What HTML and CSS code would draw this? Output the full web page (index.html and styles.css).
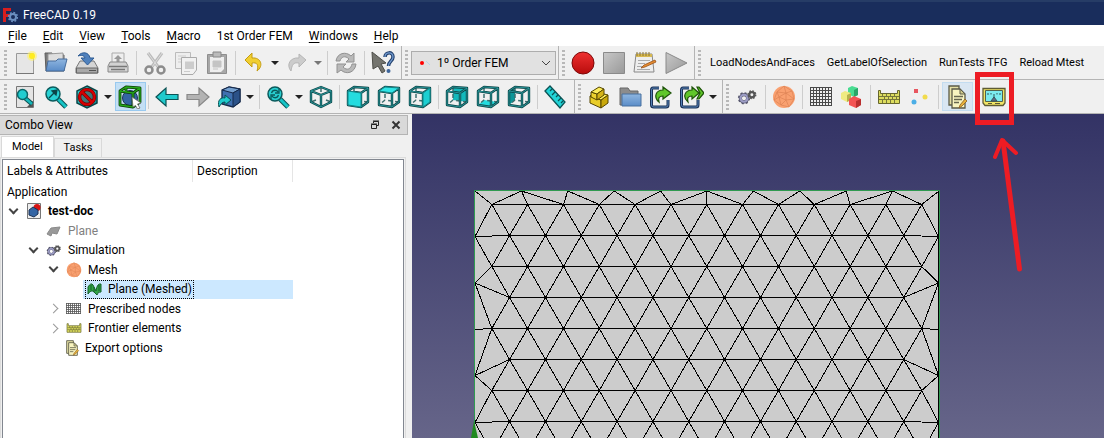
FILE: index.html
```html
<!DOCTYPE html>
<html lang="en">
<head>
<meta charset="utf-8">
<title>FreeCAD 0.19</title>
<link rel="stylesheet" href="styles.css">
</head>
<body>
<svg class="defs" aria-hidden="true">
  <defs>
    <linearGradient id="cy" x1="0" y1="0" x2="1" y2="1"><stop offset="0" stop-color="#34e0e2"/><stop offset="1" stop-color="#06989a"/></linearGradient>
    <linearGradient id="gr" x1="0" y1="0" x2="1" y2="1"><stop offset="0" stop-color="#c8c8c8"/><stop offset="1" stop-color="#999"/></linearGradient>
    <linearGradient id="bl" x1="0" y1="0" x2="0" y2="1"><stop offset="0" stop-color="#8fb6e0"/><stop offset="1" stop-color="#5a8cc8"/></linearGradient>
    <linearGradient id="rd" x1="0" y1="0" x2="0" y2="1"><stop offset="0" stop-color="#ef3030"/><stop offset="1" stop-color="#b80c0c"/></linearGradient>
    <symbol id="wire" viewBox="0 0 24 24">
      <g fill="none" stroke-linejoin="round">
        <path d="M8 2v13M22 17L8 15L2 20" stroke="#3d6f70" stroke-width="1.500" stroke-dasharray="4 3"/>
        <path d="M2 6L15 8V22L2 20ZM2 6L8 2L22 3L15 8M22 3V17L15 22" stroke="#0b4648" stroke-width="2.400"/>
        <path d="M2 6L15 8V22L2 20ZM2 6L8 2L22 3L15 8M22 3V17L15 22" stroke="#2fa5a8" stroke-width="0.800"/>
      </g>
    </symbol>
    <symbol id="gears" viewBox="0 0 24 24">
      <circle cx="8" cy="14" r="4.2" fill="none" stroke="#55556c" stroke-width="3.6"/>
      <circle cx="8" cy="14" r="6" fill="none" stroke="#55556c" stroke-width="2" stroke-dasharray="2.4 2.3"/>
      <circle cx="8" cy="14" r="4" fill="none" stroke="#9d9dc6" stroke-width="2.4"/>
      <circle cx="17" cy="10" r="3" fill="none" stroke="#555" stroke-width="2.6"/>
      <circle cx="17" cy="10" r="4.4" fill="none" stroke="#555" stroke-width="1.6" stroke-dasharray="1.8 1.65"/>
    </symbol>
    <symbol id="ball" viewBox="0 0 24 24">
      <circle cx="12" cy="12" r="11" fill="#f9a070"/>
      <path d="M12 1L5 7L2 15L9 20L17 22L22 14L20 6L12 1L14 8L22 14L14 15L9 20L7 12L2 15M5 7L14 8L7 12L5 7M14 8L20 6M14 8V15L17 22M7 12L14 15" fill="none" stroke="#dc8354" stroke-width="0.700"/>
    </symbol>
    <symbol id="grid" viewBox="0 0 24 24">
      <path d="M1 2.500H23M1 5.500H23M1 8.500H23M1 11.500H23M1 14.500H23M1 17.500H23M1 20.500H23M1.500 2V21M4.500 2V21M7.500 2V21M10.500 2V21M13.500 2V21M16.500 2V21M19.500 2V21M22.500 2V21" stroke="#4a4a4a" fill="none"/>
    </symbol>
    <symbol id="grid-small" viewBox="0 0 16 16">
      <path d="M0 2.500H15M0 4.500H15M0 6.500H15M0 8.500H15M0 10.500H15M0 12.500H15M.5 2V13M2.500 2V13M4.500 2V13M6.500 2V13M8.500 2V13M10.500 2V13M12.500 2V13M14.500 2V13" stroke="#555" stroke-opacity=".8" fill="none"/>
    </symbol>
    <symbol id="wall" viewBox="0 0 24 24">
      <path d="M1.500 5.500H3.500V8.500H20.500V5.500H22.500V18.500H1.500Z" fill="#dcdc5e" stroke="#66662c"/>
      <path d="M2 11.500H22M2 14.500H22M5.500 9V12M9.500 9V12M13.500 9V12M17.500 9V12M7.500 12V15M11.500 12V15M15.500 12V15M19.500 12V15M5.500 15V18M9.500 15V18M13.500 15V18M17.500 15V18" stroke="#77773a" fill="none"/>
    </symbol>
    <symbol id="notes" viewBox="0 0 24 24">
      <path d="M4 1H14V20H4Z" fill="#e4dfa4" stroke="#5b5b48" stroke-width="1.300"/>
      <path d="M7 4H15L20 9V23H7Z" fill="#f8f4c0" stroke="#5b5b48" stroke-width="1.300"/>
      <path d="M15 4V9H20Z" fill="#d2cc8b" stroke="#5b5b48"/>
      <path d="M9 11.500H18M9 14.500H17M9 17.500H14" stroke="#66664f" stroke-width="1.300"/>
      <path d="M20 14L15 20L14 23L17 21L22 16Z" fill="#e8b33a" stroke="#8a5a20" stroke-width="0.800"/>
    </symbol>
    <symbol id="folder" viewBox="0 0 24 24">
      <path d="M2 3H10L12 6H20V20H2Z" fill="#8c8c8c" stroke="#666"/>
      <path d="M4 9H23V21H4Z" fill="url(#bl)" stroke="#49709f"/>
    </symbol>
  </defs>
</svg>

<header class="title">
  <svg width="16" height="16" viewBox="0 0 16 16"><path d="M1 1H9V4H4V7H8V10H4V15H1Z" fill="#d81e1e"/><circle cx="11" cy="10" r="3" fill="none" stroke="#6c8fc0" stroke-width="2"/><circle cx="11" cy="10" r="4.500" fill="none" stroke="#6c8fc0" stroke-width="1.500" stroke-dasharray="1.800 1.700"/></svg>
  <span>FreeCAD 0.19</span>
</header>

<nav class="menu">
  <button><u>F</u>ile</button><button><u>E</u>dit</button><button><u>V</u>iew</button><button><u>T</u>ools</button><button><u>M</u>acro</button><button>1st Order FEM</button><button><u>W</u>indows</button><button><u>H</u>elp</button>
</nav>

<div class="bar">
  <div class="group">
    <i class="handle"></i>
    <button class="tool" aria-label="New"><svg viewBox="0 0 24 24"><path d="M3.500 2.500H20.500V22.500H3.500Z" fill="#e6e6e6" stroke="#999"/><path d="M3 22.500H21" stroke="#777"/><circle cx="19" cy="5" r="5" fill="#fff26a" opacity=".6"/><circle cx="19" cy="5" r="3" fill="#ffec1f"/></svg></button>
    <button class="tool" aria-label="Open"><svg viewBox="0 0 24 24"><path d="M1 2H8L9 4H20V20H2Z" fill="#7b7b7b" stroke="#5e5e5e"/><path d="M4 3L19 2V12H4Z" fill="#dedede" stroke="#999"/><path d="M4 10H12L14 8H23L20 20H2Z" fill="url(#bl)" stroke="#466c9c"/></svg></button>
    <button class="tool" aria-label="Save"><svg viewBox="0 0 24 24"><path d="M5 10H19L23 17V22H1V17Z" fill="#d5d5d5" stroke="#777"/><path d="M1.500 17H22.500V22H1.500Z" fill="#a9a9a9" stroke="#666"/><path d="M14 19.500H21" stroke="#555"/><path d="M3 5C7 0 14 1 15 7H19L12.500 14L6 7H10C9 4 6 4 3 5Z" fill="#4f81bd" stroke="#2f5c94"/></svg></button>
    <button class="tool" aria-label="Print"><svg viewBox="0 0 24 24"><path d="M6 2H18V14H6Z" fill="#eee" stroke="#aaa"/><path d="M12 4L16 8H13.500V12H10.500V8H8Z" fill="#999"/><path d="M4 11H20L22 15V21H2V15Z" fill="#d2d2d2" stroke="#888"/><path d="M3 15.500H21M5 18.500H19" stroke="#777" stroke-width="1.500"/></svg></button>
    <i class="sep"></i>
    <button class="tool" aria-label="Cut"><svg viewBox="0 0 24 24"><path d="M5 2L16 17M19 2L8 17" stroke="#bbb" stroke-width="3"/><path d="M5 2L15 16M19 2L9 16" stroke="#ddd" stroke-width="1"/><circle cx="6" cy="19" r="3.500" fill="none" stroke="#8c8c8c" stroke-width="2.500"/><circle cx="18" cy="19" r="3.500" fill="none" stroke="#8c8c8c" stroke-width="2.500"/></svg></button>
    <button class="tool" aria-label="Copy"><svg viewBox="0 0 24 24"><path d="M1.500 1.500H16.500V17.500H1.500Z" fill="#eee" stroke="#bbb"/><path d="M4 5H12M4 8H8M4 11H8" stroke="#ccc"/><path d="M7.500 6.500H22.500V19L19 23.500H7.500Z" fill="#f1f1f1" stroke="#aaa"/><path d="M11 10.500H20V18H11Z" fill="#ccc"/><path d="M10 20.500H16" stroke="#ccc"/></svg></button>
    <button class="tool" aria-label="Paste"><svg viewBox="0 0 24 24"><path d="M2.500 3.500H21.500V22.500H2.500Z" fill="#a7a7a7" stroke="#8e8e8e"/><path d="M5 6H19V18L16 21H5Z" fill="#eee"/><path d="M8 1H16V6H8Z" fill="#bbb" stroke="#888"/><path d="M8 10H16V16H8ZM8 18H13" fill="#c4c4c4" stroke="#c4c4c4"/></svg></button>
    <i class="sep"></i>
    <button class="tool drop" aria-label="Undo"><svg viewBox="0 0 24 24"><path d="M10 2L3 9L10 16V12C15 11 17 14 15 20C22 15 19 6 10 7Z" fill="#f1cf32" stroke="#c49c10"/></svg></button>
    <button class="tool drop muted" aria-label="Redo"><svg viewBox="0 0 24 24"><path d="M14 3L21 9L14 16V12C8 11 7 14 6 20C1 14 5 6 14 7Z" fill="#ccc" stroke="#b5b5b5"/></svg></button>
    <i class="sep"></i>
    <button class="tool" aria-label="Refresh"><svg viewBox="0 0 24 24"><path d="M2 10C3 2 12 0 17 5L20 2V11H12L15 8C11 4 7 6 6 10Z" fill="#b9b9b9" stroke="#929292"/><path d="M22 13C21 22 12 24 7 19L3 22V13H12L9 16C13 20 17 18 18 13Z" fill="#b9b9b9" stroke="#929292"/></svg></button>
    <i class="sep"></i>
    <button class="tool" aria-label="What's this?"><svg viewBox="0 0 24 24"><path d="M1 1L15 12L10 13L14 20L11 22L7 15L2 18Z" fill="#74746e" stroke="#4e4e49"/><path d="M14 6C14 1 22 0 22 6C22 10 17.500 10 17.500 15" fill="none" stroke="#24416d" stroke-width="3.500"/><path d="M14 6C14 1 22 0 22 6C22 10 17.500 10 17.500 15" fill="none" stroke="#7099ce" stroke-width="1.300"/><circle cx="17.500" cy="20" r="2" fill="#3d659b"/></svg></button>
  </div>
  <div class="group">
    <i class="handle"></i>
    <div class="combo">
      <svg class="combo-dot" viewBox="0 0 16 16"><circle cx="4" cy="8" r="2" fill="#f00"/><path d="M8 6L12 10" stroke="#b9d5ea" stroke-width="1"/></svg>
      <select aria-label="Workbench"><option>1º Order FEM</option></select>
      <svg class="combo-arrow" viewBox="0 0 10 6"><path d="M1 1L5 5L9 1" fill="none" stroke="#444"/></svg>
    </div>
  </div>
  <div class="group">
    <i class="handle"></i>
    <button class="tool" aria-label="Record macro"><svg viewBox="0 0 24 24"><circle cx="12" cy="12" r="11" fill="url(#rd)" stroke="#7d0808"/></svg></button>
    <button class="tool" aria-label="Stop macro"><svg viewBox="0 0 24 24"><path d="M1.500 1.500H22.500V22.500H1.500Z" fill="url(#gr)" stroke="#8a8a8a"/></svg></button>
    <button class="tool" aria-label="Macros"><svg viewBox="0 0 24 24"><path d="M3 3H19L21 21H1Z" fill="#eee" stroke="#888"/><path d="M3 3H19V6H3Z" fill="#d7b952"/><path d="M4 1V5M7 1V5M10 1V5M13 1V5M16 1V5" stroke="#8a7530"/><path d="M5 9.500H17M5 12.500H12M4 15.500H10M4 18.500H17" stroke="#aaa"/><path d="M22 9L11 14L8 17L12 16L23 11Z" fill="#e88d2e" stroke="#96501a" stroke-width=".8"/></svg></button>
    <button class="tool" aria-label="Execute macro"><svg viewBox="0 0 24 24"><path d="M2 1.500L23 12L2 22.500Z" fill="url(#gr)" stroke="#8a8a8a"/></svg></button>
  </div>
  <div class="group texts">
    <i class="handle"></i>
    <button>LoadNodesAndFaces</button><button>GetLabelOfSelection</button><button>RunTests TFG</button><button>Reload Mtest</button>
  </div>
</div>

<div class="bar">
  <div class="group">
    <i class="handle"></i>
    <button class="tool" aria-label="Fit all"><svg viewBox="0 0 24 24"><path d="M3.500 1.500H20.500V22.500H3.500Z" fill="#e4e4e4" stroke="#777"/><path d="M20 16V22H14Z" fill="#555"/><path d="M12 13L19 19" stroke="#0b5254" stroke-width="4.500"/><path d="M12 13L19 19" stroke="#16b8ba" stroke-width="2.500"/><circle cx="9.500" cy="9.500" r="5" fill="#20cdd0" stroke="#0b6668" stroke-width="1.500"/></svg></button>
    <button class="tool" aria-label="Fit selection"><svg viewBox="0 0 24 24"><path d="M14 14L22 22" stroke="#0b5254" stroke-width="5"/><path d="M14 14L22 22" stroke="#16c4c6" stroke-width="3"/><circle cx="9" cy="9" r="7" fill="#28d2d4" stroke="#0b5a5c" stroke-width="1.500"/><path d="M5 13L10 8L8 6L13 5L12 10L10 8" fill="#0b4648" stroke="#0b4648" stroke-width="1.300"/></svg></button>
    <button class="tool drop" aria-label="Draw style"><svg viewBox="0 0 24 24"><path d="M12 1L22 6V18L12 23L2 18V6Z" fill="url(#cy)" stroke="#0b4648" stroke-width="1.500"/><circle cx="12" cy="12" r="7.500" fill="#555" fill-opacity=".65" stroke="#700" stroke-width="3.500"/><path d="M7 7L17 17" stroke="#700" stroke-width="3.500"/><circle cx="12" cy="12" r="7.500" fill="none" stroke="#d80000" stroke-width="2.200"/><path d="M7 7L17 17" stroke="#d80000" stroke-width="2.200"/></svg></button>
    <button class="tool on" aria-label="Bounding box"><svg viewBox="0 0 24 24"><circle cx="12" cy="13" r="7.500" fill="#3465a4" stroke="#1c3356"/><g fill="none" stroke-linejoin="round"><path d="M2 6L15 8V22L2 20ZM2 6L8 2L22 3L15 8M22 3V17L15 22M8 2V8" stroke="#0b3b05" stroke-width="2.800"/><path d="M2 6L15 8V22L2 20ZM2 6L8 2L22 3L15 8M22 3V17L15 22M8 2V8" stroke="#25a81a" stroke-width="1.300"/></g><path d="M14 12L23 18L19.500 19L22 23L19.500 24L17.500 20.500L15 22Z" fill="#fff" stroke="#666" stroke-width=".8"/></svg></button>
    <i class="sep"></i>
    <button class="tool" aria-label="Back"><svg viewBox="0 0 24 24"><path d="M1 12L11 3V9.500H23V14.500H11V21Z" fill="#1fcacc" stroke="#0b5254" stroke-width="1.200"/></svg></button>
    <button class="tool" aria-label="Forward"><svg viewBox="0 0 24 24"><path d="M23 12L13 3V9.500H1V14.500H13V21Z" fill="#b3b3b3" stroke="#888" stroke-width="1.200"/></svg></button>
    <button class="tool drop" aria-label="Linked object"><svg viewBox="0 0 24 24"><path d="M5 5L12 2L23 4V17L16 22L5 19Z" fill="#3f70b0" stroke="#15294a" stroke-width="1.300"/><path d="M5 5L16 8L23 4L12 2Z" fill="#739fcf" stroke="#15294a"/><path d="M16 8V22L23 17V4Z" fill="#2b5288" stroke="#15294a"/><path d="M2 22C0 15 4 12 8 13V10L14 15L8 20V17C5 17 4 19 2 22Z" fill="#20cbcd" stroke="#0b5254"/></svg></button>
    <i class="sep"></i>
    <button class="tool drop" aria-label="Zoom"><svg viewBox="0 0 24 24"><path d="M14 14L22 22" stroke="#0b5254" stroke-width="5"/><path d="M14 14L22 22" stroke="#16c4c6" stroke-width="3"/><circle cx="9" cy="9" r="7" fill="#28cfd1" stroke="#0b5a5c" stroke-width="1.500"/><path d="M5.500 8C7 4 11 5 12 7M13 4V8H9M12.500 10C11 14 7 13 6 11M5 14V10H9" fill="none" stroke="#0b5a5c" stroke-width="1.300"/></svg></button>
    <button class="tool" aria-label="Isometric"><svg viewBox="0 0 24 24"><g fill="none" stroke-linejoin="round"><path d="M12 2V7M2 17L7 15M22 17L17 15" stroke="#3d6f70" stroke-width="1.500"/><path d="M12 2L22 6V17L12 22L2 17V6ZM2 6L12 10L22 6M12 10V22" stroke="#0b4648" stroke-width="2.400"/><path d="M12 2L22 6V17L12 22L2 17V6ZM2 6L12 10L22 6M12 10V22" stroke="#2fa5a8" stroke-width=".8"/></g></svg></button>
    <i class="sep"></i>
    <button class="tool" aria-label="Front"><svg viewBox="0 0 24 24"><use href="#wire"/><path d="M2 6L15 8V22L2 20Z" fill="#24dcdf" stroke="#118486"/></svg></button>
    <button class="tool" aria-label="Top"><svg viewBox="0 0 24 24"><use href="#wire"/><path d="M2 6L8 2L22 3L15 8Z" fill="#30e4e6" stroke="#118486"/></svg></button>
    <button class="tool" aria-label="Right"><svg viewBox="0 0 24 24"><use href="#wire"/><path d="M15 8L22 3V17L15 22Z" fill="#1ccfd2" stroke="#118486"/></svg></button>
    <i class="sep"></i>
    <button class="tool" aria-label="Rear"><svg viewBox="0 0 24 24"><path d="M8 2L22 3V17L8 15Z" fill="#14b9bc"/><use href="#wire"/></svg></button>
    <button class="tool" aria-label="Bottom"><svg viewBox="0 0 24 24"><path d="M2 20L8 15L22 17L15 22Z" fill="#24dcdf"/><use href="#wire"/></svg></button>
    <button class="tool" aria-label="Left"><svg viewBox="0 0 24 24"><path d="M2 6L8 2V15L2 20Z" fill="#0c9698"/><use href="#wire"/></svg></button>
    <i class="sep"></i>
    <button class="tool" aria-label="Measure"><svg viewBox="0 0 24 24"><path d="M1 6L6 1L21 17L16 23Z" fill="#21d3d6" stroke="#0b5254" stroke-width="1.300"/><path d="M8 4L6 6M11 7L8 10M14 10L12 12M17 13L14 16M19 16L17 18" stroke="#0b5254" stroke-width="1.200"/></svg></button>
  </div>
  <div class="group">
    <i class="handle"></i>
    <button class="tool" aria-label="Part"><svg viewBox="0 0 24 24"><g stroke="#564700" stroke-linejoin="round"><path d="M3 11L14 15V23L3 18Z" fill="#e8cc28"/><path d="M14 15L21 10V18L14 23Z" fill="#c9a80c"/><path d="M3 11L9 7L21 10L14 15Z" fill="#fcec5a"/><path d="M4 7L10 9V15L4 12Z" fill="#ecd12e"/><path d="M4 7L12 2L17 4L10 9Z" fill="#fcec5a"/><path d="M10 9L17 4V10L10 15Z" fill="#d4b41a"/></g></svg></button>
    <button class="tool" aria-label="Group"><svg viewBox="0 0 24 24"><use href="#folder"/></svg></button>
    <button class="tool" aria-label="Make link"><svg viewBox="0 0 24 24"><path d="M10 3H4Q2.500 3 2.500 5V20Q2.500 22 5 22H17Q19 22 19 20V15" fill="none" stroke="#1b3257" stroke-width="3"/><path d="M10 3H4Q2.500 3 2.500 5V20Q2.500 22 5 22H17Q19 22 19 20V15" fill="none" stroke="#5580b5"/><path d="M14 2L22 8L14 14V11C10 11 9 13 10 17C4 12 7 5 14 5Z" fill="#60c62a" stroke="#1d5208" stroke-width="1.200"/></svg></button>
    <button class="tool drop" aria-label="Link actions"><svg viewBox="0 0 24 24"><path d="M9 3H3Q1.500 3 1.500 5V20Q1.500 22 4 22H16Q18 22 18 20V15" fill="none" stroke="#1b3257" stroke-width="3"/><path d="M9 3H3Q1.500 3 1.500 5V20Q1.500 22 4 22H16Q18 22 18 20V15" fill="none" stroke="#5580b5"/><path d="M12 2L19 8L12 14V11C8 11 7 13 8 17C2 12 5 5 12 5ZM17 2H19L24 8L19 14H17L20 8Z" fill="#60c62a" stroke="#1d5208" stroke-width="1.200"/></svg></button>
  </div>
  <div class="group">
    <i class="handle"></i>
    <button class="tool" aria-label="Simulation"><svg class="small" viewBox="0 0 24 24"><use href="#gears"/></svg></button>
    <i class="sep"></i>
    <button class="tool" aria-label="Mesh"><svg viewBox="0 0 24 24"><use href="#ball"/></svg></button>
    <i class="sep"></i>
    <button class="tool" aria-label="Nodes"><svg viewBox="0 0 24 24"><use href="#grid"/></svg></button>
    <button class="tool" aria-label="Materials"><svg viewBox="0 0 24 24"><path d="M8 3L12 1L18 3V10L14 12L8 9Z" fill="#49dc91"/><path d="M14 5L18 3V10L14 12Z" fill="#2aa568"/><path d="M1 8L5 6L11 8V15L7 17L1 14Z" fill="#f0eb81"/><path d="M7 10L11 8V15L7 17Z" fill="#b6b04c"/><path d="M9 14L14 11L21 14V20L16 23L9 20Z" fill="#f35353"/><path d="M16 16L21 14V20L16 23Z" fill="#b92f2f"/></svg></button>
    <i class="sep"></i>
    <button class="tool" aria-label="Frontier"><svg viewBox="0 0 24 24"><use href="#wall"/></svg></button>
    <button class="tool" aria-label="Points"><svg viewBox="0 0 24 24"><path d="M6 4H10V8H6Z" fill="#e8565f"/><circle cx="17" cy="12" r="2.500" fill="#f1db4c"/><circle cx="6" cy="17" r="2.500" fill="#4baee6"/></svg></button>
    <i class="sep"></i>
    <button class="tool on soft" aria-label="Export options"><svg viewBox="0 0 24 24"><use href="#notes"/></svg></button>
    <i class="sep hidden"></i>
    <button class="tool marked" aria-label="Run"><svg viewBox="0 0 24 24"><path d="M1 3.500H23V18L21 20.500H3L1 18Z" fill="#f0e565" stroke="#5e5b35" stroke-width="1.300"/><path d="M3.500 5.500H20.500V16.500H3.500Z" fill="#7beaf0" stroke="#52624e"/><path d="M6 10V8M9 9.500V8M15 9.500V8M18 10V8" stroke="#31565b" fill="none"/><path d="M12 9V13M9 16L12 12L15 16Z" stroke="#31565b" fill="#668"/><path d="M6 18.500H10M13 18.500H18" stroke="#5e5b35"/></svg></button>
  </div>
</div>

<main class="work">
  <aside class="dock">
    <div class="dock-title">
      <span>Combo View</span>
      <button aria-label="Float"><svg viewBox="0 0 10 10"><path d="M3.500 3V1.500H8.500V5.500H7M1.500 4.500H6.500V8.500H1.500ZM1 4H7M3 1H9" fill="none" stroke="#222"/></svg></button>
      <button aria-label="Close"><svg viewBox="0 0 10 10"><path d="M1.500 1.500L8.500 8.500M8.500 1.500L1.500 8.500" stroke="#333" stroke-width="2"/></svg></button>
    </div>
    <div class="tabs"><button class="tab current">Model</button><button class="tab">Tasks</button></div>
    <div class="pane">
      <div class="tree" role="tree">
        <div class="head"><span>Labels &amp; Attributes</span><span>Description</span></div>
        <div class="row root" role="treeitem">Application</div>
        <div class="row l0" role="treeitem"><i class="chev open"></i><svg viewBox="0 0 16 16"><path d="M1.500.5H14.500V15.500H1.500Z" fill="#eee" stroke="#777"/><circle cx="11" cy="4.500" r="3.500" fill="#d81414"/><path d="M3 7L7 4L12 7V11L8 14L3 12Z" fill="#3465a4" stroke="#1c3356"/></svg><b>test-doc</b></div>
        <div class="row l1" role="treeitem"><i class="chev"></i><svg viewBox="0 0 16 16"><path d="M1 11L5 5L14 4L11 11L6 10L5 13Z" fill="#999" stroke="#8a8a8a"/></svg><span class="dim">Plane</span></div>
        <div class="row l1" role="treeitem"><i class="chev open"></i><svg viewBox="0 0 24 24"><use href="#gears"/></svg><span>Simulation</span></div>
        <div class="row l2" role="treeitem"><i class="chev open"></i><svg viewBox="0 0 24 24"><use href="#ball"/></svg><span>Mesh</span></div>
        <div class="row l3" role="treeitem" aria-selected="true"><div class="pick"><div class="focus"><svg viewBox="0 0 16 16"><path d="M1 13V6Q4 1 6 4L9 10Q10 2 14 3V11Q11 10 10 14L7 11Q4 8 1 13Z" fill="#31a345" stroke="#14612a"/><path d="M4 4V9M7 6V11M12 4V10" stroke="#14612a"/></svg><span>Plane (Meshed)</span></div></div></div>
        <div class="row l2" role="treeitem"><i class="chev closed"></i><svg viewBox="0 0 16 16"><use href="#grid-small"/></svg><span>Prescribed nodes</span></div>
        <div class="row l2" role="treeitem"><i class="chev closed"></i><svg viewBox="0 0 24 24"><use href="#wall"/></svg><span>Frontier elements</span></div>
        <div class="row l2 leaf" role="treeitem"><i class="chev"></i><svg viewBox="0 0 24 24"><use href="#notes"/></svg><span>Export options</span></div>
      </div>
    </div>
  </aside>
  <section class="view">
    <svg class="scene" viewBox="412 114 692 324" preserveAspectRatio="xMinYMin slice">
      <rect x="475" y="191" width="464" height="300" fill="#ccc"/>
      <path id="mesh" class="mesh"/>
      <path class="edge" d="M474.500 491V190.500H939.500V491"/>
      <path d="M474 421L478 438H471Z" fill="#1f8a1f"/>
      <path class="arrow" d="M1019.500 269L1003 141"/>
      <path class="arrow tip" d="M995 157L1002 140L1016 153"/>
    </svg>
  </section>
</main>
<script src="mesh.js"></script>
</body>
</html>
```
FILE: styles.css
```css
*, *::before, *::after { box-sizing: border-box; }
html, body { height: 100%; }
body { margin: 0; display: flex; flex-direction: column; overflow: hidden; background: #f0f0f0; color: #000; font: 12px/16px Roboto, "Open Sans", sans-serif; }
button, select { font: inherit; color: inherit; border: 0; background: none; padding: 0; margin: 0; }
svg { display: block; flex: none; }
.defs { position: absolute; width: 0; height: 0; }

.title { flex: none; height: 25px; padding: 2px 2px 0; border-top: 2px solid #263c66; background: #192d5c; color: #fff; display: flex; align-items: center; gap: 5px; }
.menu { flex: none; height: 21px; background: #fff; display: flex; align-items: center; gap: 16px; padding-left: 8px; }
.menu u { text-underline-offset: 2px; }

.bar { flex: none; height: 34px; display: flex; border-bottom: 1px solid #b4b4b4; background: #f0f0f0; }
.group { display: flex; align-items: center; padding-right: 2px; flex: none; }
.group + .group { border-left: 1px solid #b4b4b4; }
.group + .group .handle { margin-left: 3px; }
.handle { width: 3px; height: 26px; margin: 0 3px 0 4px; background: repeating-linear-gradient(#b8b8b8 0 2px, transparent 2px 4px); }
.tool { width: 31px; height: 29px; display: flex; align-items: center; padding-left: 3px; border: 0 solid transparent; flex: none; }
.tool svg { width: 24px; height: 24px; }
.tool .small { width: 21px; height: 21px; margin-left: 2px; }
.drop { width: 43px; gap: 5px; }
.drop::after { content: ""; border: 4px solid transparent; border-top-color: #222; border-bottom: 0; }
.muted::after { border-top-color: #777; }
.on { border: 1px solid #99c9ef; background: #c3dff5; padding-left: 2px; }
.soft { background: #d9e6f2; border-color: #c3dcf0; }
.sep { width: 6px; height: 24px; background: linear-gradient(#cdcdcd, #cdcdcd) 2px 0 / 1px 100% no-repeat; }
.hidden { visibility: hidden; }
.marked { position: relative; }
.marked::after { content: ""; position: absolute; z-index: 2; left: -4px; top: -10px; width: 39px; height: 53px; border: 5px solid #ed1c24; }
.texts button { padding: 0 6px; white-space: nowrap; font-size: 11px; }

.combo { position: relative; width: 145px; }
.combo select { appearance: none; width: 100%; height: 24px; padding-left: 25px; border: 1px solid #adadad; background: #e1e1e1; }
.combo-dot { position: absolute; left: 7px; top: 4px; width: 16px; height: 16px; }
.combo-arrow { position: absolute; right: 5px; top: 9px; width: 10px; height: 6px; }

.work { flex: 1; min-height: 0; display: flex; }
.dock { flex: none; width: 412px; display: flex; flex-direction: column; padding: 1px 4px 0 0; }
.dock-title { height: 20px; border: 1px solid #b4b4b4; border-left: 0; background: #d9d9d9; display: flex; align-items: center; gap: 11px; padding: 0 6px 0 5px; }
.dock-title span { flex: 1; }
.dock-title svg { width: 10px; height: 10px; }
.tabs { display: flex; align-items: flex-end; height: 22px; padding-left: 1px; }
.tab { height: 19px; padding: 0 9px; border: 1px solid #d9d9d9; border-bottom: 0; background: #f0f0f0; font-size: 11px; }
.current { height: 21px; padding: 0 10px; background: #fff; }
.pane { flex: 1; min-height: 0; border: 1px solid #dcdcdc; border-bottom: 0; margin-right: 2px; padding: 1px 1px 0; display: flex; }
.tree { flex: 1; background: #fff; border: 1px solid #828790; border-bottom: 0; overflow: hidden; }
.head { display: flex; height: 22px; }
.head span { border-right: 1px solid #e5e5e5; padding: 3px 4px 0; width: 190px; }
.head span + span { width: 100px; }
.row { height: 19px; display: flex; align-items: center; white-space: nowrap; }
.row:nth-child(odd) { height: 20px; }
.row svg { width: 16px; height: 16px; margin-right: 6px; }
.root { padding-left: 4px; }
.l0 { padding-left: 3px; }
.l1 { padding-left: 23px; }
.l2 { padding-left: 43px; }
.l3 { padding-left: 80px; }
.leaf svg { margin: 0 5px 0 -2px; }
.dim { color: #808080; }
.chev { width: 14px; height: 14px; margin-right: 6px; display: flex; align-items: center; justify-content: center; }
.chev.open::before, .chev.closed::before { content: ""; width: 7px; height: 7px; border: solid #444; border-width: 0 2px 2px 0; transform: rotate(45deg); margin-top: -4px; }
.chev.closed::before { border: solid #999; border-width: 1px 1px 0 0; margin: 0; }
.pick { background: #cce8ff; width: 210px; height: 19px; padding-left: 2px; display: flex; }
.focus { border: 1px dotted #000; display: flex; align-items: center; padding: 0 1px; }
.focus svg { margin-right: 5px; }

.view { flex: 1; min-width: 0; overflow: hidden; background: linear-gradient(#333365, #666589); }
.scene { width: 100%; height: 100%; }
.mesh { fill: none; stroke: #000; stroke-width: 1; shape-rendering: crispEdges; }
.edge { fill: none; stroke: #2f9a50; stroke-width: 1; }
.arrow { fill: none; stroke: #ed1c24; stroke-width: 5; stroke-linecap: round; stroke-linejoin: round; }
.tip { stroke-width: 4; }
```
FILE: mesh.js
```js
// Triangulated plane: staggered node rows joined to evenly spaced border nodes.
const left = 475, right = 938.5, top0 = 191, step = 35.83;
const long = Array.from({ length: 13 }, (_, i) => 491.8 + i * step);
const short = Array.from({ length: 12 }, (_, i) => 509.6 + i * step);
const rowY = Array.from({ length: 9 }, (_, i) => 204.5 + i * 31);
const seg = [];
const line = (a, b, c, d) => seg.push(`M${a} ${b}L${c} ${d}`);

rowY.forEach((y, r) => {
  const xs = r % 2 ? short : long;
  line(xs[0], y, xs[xs.length - 1], y);
  if (r < 8) {
    short.forEach((x, i) => {
      const [ys, yl] = r % 2 ? [y, rowY[r + 1]] : [rowY[r + 1], y];
      line(x, ys, long[i], yl);
      line(x, ys, long[i + 1], yl);
    });
  }
});

const topNodes = [[0], [0, 1, 2], [2, 3], [3, 4], [4, 5], [5, 6, 7], [7, 8], [8, 9], [9, 10], [10, 11, 12], [12]];
topNodes.forEach((links, k) => links.forEach(i => line(left + k * 46.4, top0, long[i], rowY[0])));

const sideNodes = [[236.5, [0, 1, 2]], [283, [2, 3, 4]], [329.5, [4]], [375.5, [4, 5, 6]], [422.5, [6, 7, 8]]];
sideNodes.forEach(([y, rows]) => rows.forEach(r => {
  const xs = r % 2 ? short : long;
  line(left, y, xs[0], rowY[r]);
  line(right, y, xs[xs.length - 1], rowY[r]);
}));
line(right, top0, right, 491);

document.getElementById("mesh").setAttribute("d", seg.join(""));
```
